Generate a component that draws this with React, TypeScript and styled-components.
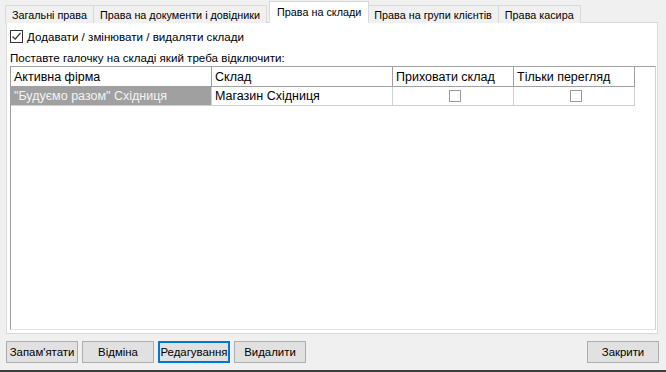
import { createGlobalStyle } from "styled-components";
import styled from "styled-components";

const GlobalStyle = createGlobalStyle`
  html, body {
    margin: 0;
    padding: 0;
    background: #f0f0f0;
  }
  body {
    font-family: "Liberation Sans", Arial, sans-serif;
    font-size: 12px;
    color: #000;
  }
`;

const Window = styled.div`
  width: 666px;
  height: 372px;
  display: flex;
  flex-direction: column;
  background: #f0f0f0;
  border-bottom: 2px solid #3c3c3c;
  box-sizing: border-box;
  overflow: hidden;
`;

const TabStrip = styled.div`
  display: flex;
  align-items: flex-end;
  height: 23px;
  padding: 0 0 0 5px;
  box-sizing: border-box;
  position: relative;
  z-index: 1;
`;

const Tab = styled.div<{ $active?: boolean }>`
  height: ${(p) => (p.$active ? "22px" : "18px")};
  padding: ${(p) => (p.$active ? "0 7px 0 7px" : "0 6px 0 6px")};
  display: flex;
  align-items: center;
  box-sizing: border-box;
  background: ${(p) => (p.$active ? "#ffffff" : "#f0f0f0")};
  border: 1px solid #d9d9d9;
  border-bottom: ${(p) => (p.$active ? "1px solid #ffffff" : "none")};
  margin-left: ${(p) => (p.$active ? "2px" : "-1px")};
  margin-right: ${(p) => (p.$active ? "-1px" : "0")};
  white-space: nowrap;
  font-size: 10.8px;
  position: relative;
  z-index: ${(p) => (p.$active ? 2 : 0)};
  &:first-child {
    margin-left: 0;
  }
`;

const Panel = styled.div`
  height: 312px;
  margin: -1px 8px 0 6px;
  background: #ffffff;
  border: 1px solid #d9d9d9;
  box-sizing: border-box;
  padding: 6px 1px 3px 3px;
  display: flex;
  flex-direction: column;
`;

const CheckRow = styled.label`
  display: flex;
  align-items: center;
  gap: 4px;
  height: 14px;
  font-size: 11.6px;
`;

const Box = styled.span<{ $checked?: boolean; $size?: number }>`
  width: ${(p) => p.$size ?? 13}px;
  height: ${(p) => p.$size ?? 13}px;
  box-sizing: border-box;
  border: 1px solid ${(p) => (p.$checked ? "#333333" : "#9a9a9a")};
  background: #ffffff;
  display: inline-flex;
  align-items: center;
  justify-content: center;
  flex-shrink: 0;
`;

const Hint = styled.div`
  margin-top: 8px;
  height: 14px;
  line-height: 14px;
  font-size: 11.6px;
`;

const Grid = styled.div`
  margin-top: 1px;
  flex: 1;
  border-left: 1px solid #a0a0a0;
  border-top: 1px solid #a0a0a0;
  border-right: 1px solid #d0d0d0;
  border-bottom: 1px solid #e3e3e3;
  display: flex;
  flex-direction: column;
`;

const Row = styled.div<{ $header?: boolean }>`
  display: flex;
  height: ${(p) => (p.$header ? "20px" : "19px")};
`;

const Cell = styled.div<{
  $w: number;
  $header?: boolean;
  $selected?: boolean;
  $center?: boolean;
}>`
  width: ${(p) => p.$w}px;
  box-sizing: border-box;
  padding-left: 3px;
  display: flex;
  align-items: center;
  justify-content: ${(p) => (p.$center ? "center" : "flex-start")};
  white-space: nowrap;
  overflow: hidden;
  background: ${(p) => (p.$selected ? "#a0a0a0" : "#ffffff")};
  color: ${(p) => (p.$selected ? "#f4f4f4" : "#000")};
  border-right: 1px solid ${(p) => (p.$header ? "#a0a0a0" : "#d0d0d0")};
  border-bottom: 1px solid ${(p) => (p.$header ? "#a0a0a0" : "#d0d0d0")};
  font-size: 12.5px;
`;

const Filler = styled.div`
  flex: 1;
`;

const ButtonBar = styled.div`
  display: flex;
  align-items: center;
  gap: 4px;
  padding: 7px 7px 0 6px;
  height: 21px;
`;

const Button = styled.button<{ $focused?: boolean }>`
  width: 72px;
  height: 22px;
  box-sizing: border-box;
  background: #e1e1e1;
  border: ${(p) => (p.$focused ? "2px solid #0078d7" : "1px solid #adadad")};
  font-family: "Liberation Sans", Arial, sans-serif;
  font-size: 11.4px;
  color: #000;
  padding: 0;
  white-space: nowrap;
`;

const Spacer = styled.div`
  flex: 1;
`;

const Tick = () => (
  <svg width="11" height="11" viewBox="0 0 11 11">
    <path d="M1.5 5.5 L4.2 8.2 L9.5 2" fill="none" stroke="#333" strokeWidth="1.2" />
  </svg>
);

const cols = [201, 181, 121, 121];

export default function App() {
  return (
    <>
      <GlobalStyle />
      <Window>
        <TabStrip>
          <Tab>Загальні права</Tab>
          <Tab>Права на документи і довідники</Tab>
          <Tab $active>Права на склади</Tab>
          <Tab>Права на групи клієнтів</Tab>
          <Tab>Права касира</Tab>
        </TabStrip>
        <Panel>
          <CheckRow>
            <Box $checked>
              <Tick />
            </Box>
            Додавати / змінювати / видаляти склади
          </CheckRow>
          <Hint>Поставте галочку на складі який треба відключити:</Hint>
          <Grid>
            <Row $header>
              <Cell $w={cols[0]} $header>Активна фірма</Cell>
              <Cell $w={cols[1]} $header>Склад</Cell>
              <Cell $w={cols[2]} $header>Приховати склад</Cell>
              <Cell $w={cols[3]} $header>Тільки перегляд</Cell>
              <Filler />
            </Row>
            <Row>
              <Cell $w={cols[0]} $selected>"Будуємо разом" Східниця</Cell>
              <Cell $w={cols[1]}>Магазин Східниця</Cell>
              <Cell $w={cols[2]} $center>
                <Box $size={12} />
              </Cell>
              <Cell $w={cols[3]} $center>
                <Box $size={12} />
              </Cell>
              <Filler />
            </Row>
          </Grid>
        </Panel>
        <ButtonBar>
          <Button>Запам'ятати</Button>
          <Button>Відміна</Button>
          <Button $focused>Редагування</Button>
          <Button>Видалити</Button>
          <Spacer />
          <Button>Закрити</Button>
        </ButtonBar>
      </Window>
    </>
  );
}
